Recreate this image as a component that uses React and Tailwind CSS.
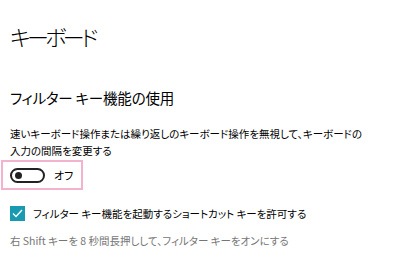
import React, { useState } from "react";

const jp = "font-['Noto_Sans_CJK_JP','Noto_Sans',sans-serif] [font-feature-settings:'palt']";

const App = () => {
  const [on, setOn] = useState(false);
  const [allow, setAllow] = useState(true);

  return (
    <div className={`w-[400px] h-[268px] bg-white text-black overflow-hidden ${jp}`}>
      <div className="pl-[10px] pt-[21px]">
        <h1 className="text-[22px] leading-[30px] font-light tracking-[-3.5px]">キーボード</h1>

        <h2 className="mt-[37px] text-[14.5px] leading-[20px] font-normal tracking-[-0.2px]">フィルター キー機能の使用</h2>

        <p className="mt-[17px] text-[10.5px] leading-[17px]">
          速いキーボード操作または繰り返しのキーボード操作を無視して、キーボードの
          <br />
          入力の間隔を変更する
        </p>
      </div>

      {/* focus rect round the toggle */}
      <div className="ml-[1px] mt-[1px] w-[82px] h-[30px] border-2 border-[#f3b3cf] flex items-center pl-[7px]">
        <button
          onClick={() => setOn(!on)}
          className={`w-[35px] h-[15px] rounded-full border-2 flex items-center px-[3px] ${
            on ? "bg-[#1a9ab1] border-[#1a9ab1] justify-end" : "border-[#222] justify-start"
          }`}
        >
          <span className={`w-[7px] h-[7px] rounded-full ${on ? "bg-white" : "bg-[#222]"}`} />
        </button>
        <span className="ml-[9px] text-[11px] leading-none">{on ? "オン" : "オフ"}</span>
      </div>

      <div className="pl-[10px]">
        <label className="mt-[16px] flex items-center gap-[8px] cursor-pointer">
          <span
            onClick={() => setAllow(!allow)}
            className={`w-[15px] h-[15px] flex items-center justify-center ${allow ? "bg-[#1a9ab1]" : "border-2 border-[#333]"}`}
          >
            {allow && (
              <svg width="11" height="9" viewBox="0 0 11 9" fill="none">
                <path d="M1 4.5 L4 7.5 L10 1" stroke="white" strokeWidth="1.4" />
              </svg>
            )}
          </span>
          <span className="text-[10.5px] leading-[15px]">フィルター キー機能を起動するショートカット キーを許可する</span>
        </label>

        <p className="mt-[12px] text-[10.5px] leading-[15px] text-[#767676]">
          右 Shift キーを 8 秒間長押しして、フィルター キーをオンにする
        </p>
      </div>
    </div>
  );
};

export default App;
